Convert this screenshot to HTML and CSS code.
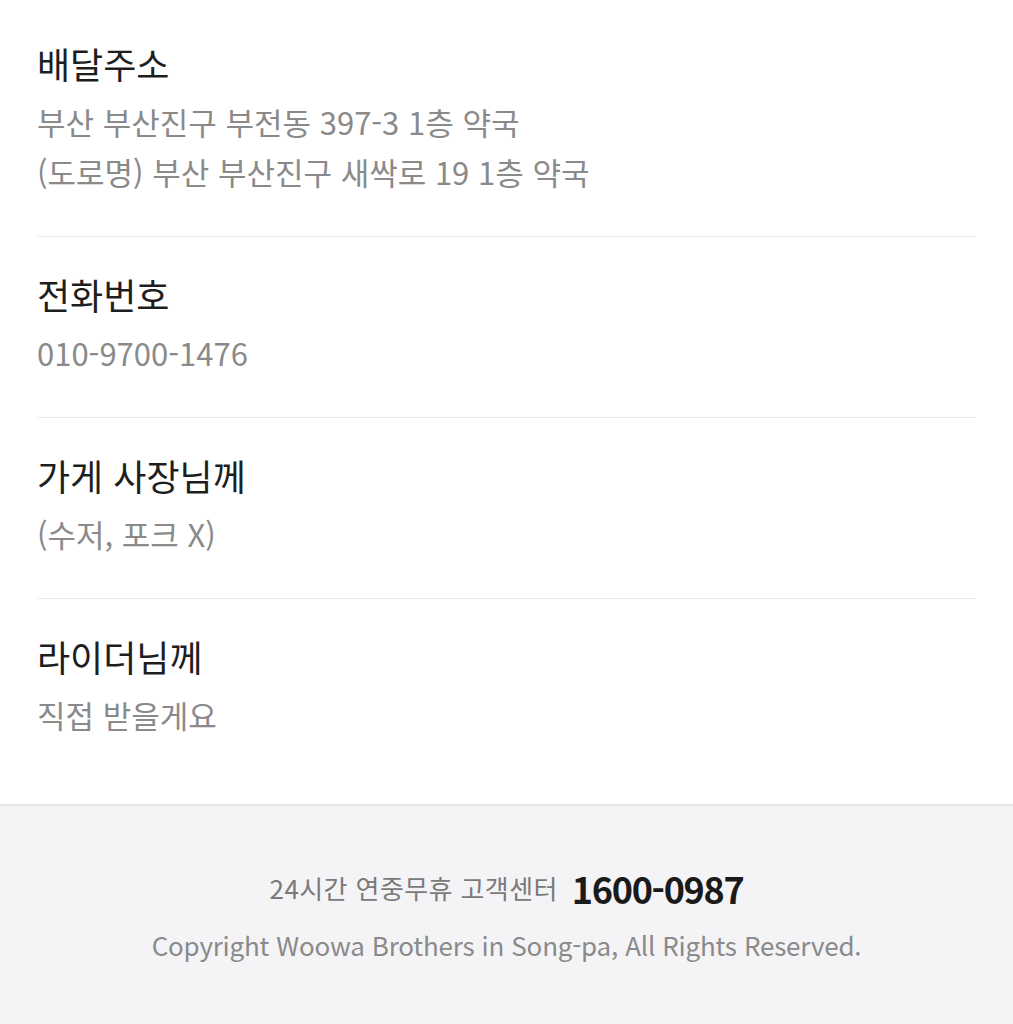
FILE: index.html
```html
<!DOCTYPE html>
<html lang="ko">
<head>
<meta charset="utf-8">
<link rel="stylesheet" href="styles.css">
</head>
<body>
<main class="info">
  <section class="item">
    <h2 class="title">배달주소</h2>
    <p class="sub">부산 부산진구 부전동 397-3 1층 약국</p>
    <p class="sub">(도로명) 부산 부산진구 새싹로 19 1층 약국</p>
  </section>
  <section class="item">
    <h2 class="title">전화번호</h2>
    <p class="sub">010-9700-1476</p>
  </section>
  <section class="item">
    <h2 class="title">가게 사장님께</h2>
    <p class="sub">(수저, 포크 X)</p>
  </section>
  <section class="item last">
    <h2 class="title">라이더님께</h2>
    <p class="sub">직접 받을게요</p>
  </section>
</main>
<footer class="footer">
  <p class="cs"><span class="cs-label">24시간 연중무휴 고객센터</span><span class="cs-num">1600-0987</span></p>
  <p class="copy">Copyright Woowa Brothers in Song-pa, All Rights Reserved.</p>
</footer>
</body>
</html>
```
FILE: styles.css
```css
* { box-sizing: border-box; }
html, body { margin: 0; padding: 0; background: #fff; }
body {
  font-family: "Noto Sans CJK KR", "Noto Sans", sans-serif;
  color: #222;
}
.info { padding: 0 37px; }
.item {
  padding: 39px 0 39px;
  border-bottom: 1px solid #ebebeb;
}
.item + .item { padding-top: 33px; }
.item.last { border-bottom: none; padding-bottom: 64px; }
.title {
  margin: 0 0 10px;
  font-size: 36px;
  line-height: 48px;
  font-weight: 400;
  color: #1e1e1e;
}
.sub {
  margin: 0;
  font-size: 31px;
  line-height: 50px;
  color: #8a8a8a;
}
.footer {
  background: #f4f4f6;
  border-top: 2px solid #e6e6e8;
  padding: 57px 0 0;
  text-align: center;
  height: 222px;
}
.cs { margin: 0; line-height: 44px; }
.cs-label {
  font-size: 26px;
  color: #7a7a7a;
  letter-spacing: 0.4px;
  vertical-align: middle;
}
.cs-num {
  font-size: 36px;
  font-weight: 700;
  color: #1a1a1a;
  letter-spacing: -1.3px;
  margin-left: 14px;
  vertical-align: middle;
}
.copy {
  margin: 17px 0 0;
  font-size: 26px;
  line-height: 36px;
  color: #8a8a8a;
  letter-spacing: -0.2px;
}
```
